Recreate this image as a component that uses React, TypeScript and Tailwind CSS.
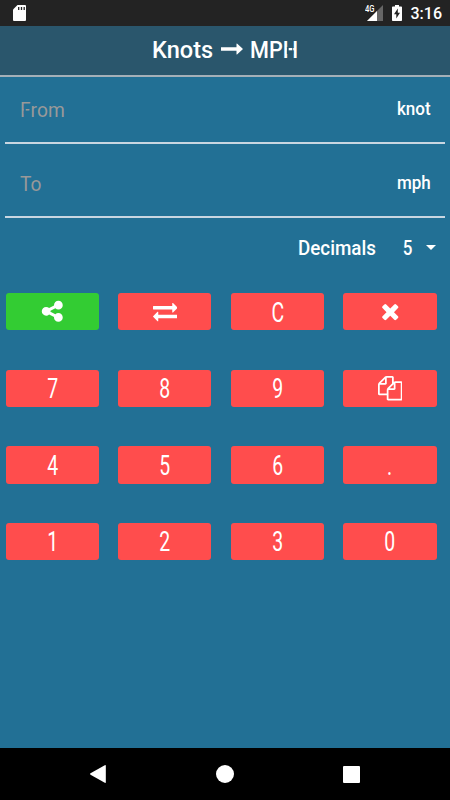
import React from "react";

const paths = {
  share:
    "M1344 1024q133 0 226.5 93.5t93.5 226.5-93.5 226.5-226.5 93.5-226.5-93.5-93.5-226.5q0-12 2-34l-360-180q-92 86-218 86-133 0-226.5-93.5t-93.5-226.5 93.5-226.5 226.5-93.5q126 0 218 86l360-180q-2-22-2-34 0-133 93.5-226.5t226.5-93.5 226.5 93.5 93.5 226.5-93.5 226.5-226.5 93.5q-126 0-218-86l-360 180q2 22 2 34t-2 34l360 180q92-86 218-86z",
  swap:
    "M1792 1184v192q0 13-9.5 22.5t-22.5 9.5h-1376v192q0 13-9.5 22.5t-22.5 9.5q-12 0-24-10l-319-320q-9-9-9-22 0-14 9-23l320-320q9-9 23-9 13 0 22.5 9.5t9.5 22.5v192h1376q13 0 22.5 9.5t9.5 22.5zm0-544q0 14-9 23l-320 320q-9 9-23 9-13 0-22.5-9.5t-9.5-22.5v-192h-1376q-13 0-22.5-9.5t-9.5-22.5v-192q0-13 9.5-22.5t22.5-9.5h1376v-192q0-14 9-23t23-9q12 0 24 10l319 319q9 9 9 23z",
  remove:
    "M1490 1322q0 40-28 68l-136 136q-28 28-68 28t-68-28l-294-294-294 294q-28 28-68 28t-68-28l-136-136q-28-28-28-68t28-68l294-294-294-294q-28-28-28-68t28-68l136-136q28-28 68-28t68 28l294 294 294-294q28-28 68-28t68 28l136 136q28 28 28 68t-28 68l-294 294 294 294q28 28 28 68z",
  copy:
    "M1696 384q40 0 68 28t28 68v1216q0 40-28 68t-68 28h-960q-40 0-68-28t-28-68v-288h-544q-40 0-68-28t-28-68v-672q0-40 20-88t48-76l408-408q28-28 76-48t88-20h416q40 0 68 28t28 68v328q68-40 128-40h416zm-544 213l-299 299h299v-299zm-640-384l-299 299h299v-299zm196 647l316-316v-416h-384v416q0 40-28 68t-68 28h-416v640h512v-256q0-40 20-88t48-76zm956 804v-1152h-384v416q0 40-28 68t-68 28h-416v640h896z",
};

type IconName = keyof typeof paths;

function Icon({ name }: { name: IconName }) {
  return (
    <svg viewBox="0 0 1792 1792" className="h-[24.5px] w-[24.5px] fill-white">
      <path d={paths[name]} />
    </svg>
  );
}

const keys: { label?: string; icon?: IconName }[] = [
  { icon: "share" }, { icon: "swap" }, { label: "C" }, { icon: "remove" },
  { label: "7" }, { label: "8" }, { label: "9" }, { icon: "copy" },
  { label: "4" }, { label: "5" }, { label: "6" }, { label: "." },
  { label: "1" }, { label: "2" }, { label: "3" }, { label: "0" },
];

function Key({ label, icon }: { label?: string; icon?: IconName }) {
  return (
    <button
      className={`flex h-[37.4px] w-[93.4px] items-center justify-center rounded-[3px] ${
        icon === "share" ? "bg-[#33cc33]" : "bg-[#ff4d4d]"
      }`}
    >
      {icon ? (
        <Icon name={icon} />
      ) : (
        <span className="mt-[3px] scale-x-[0.72] text-[27px] leading-none">{label}</span>
      )}
    </button>
  );
}

function StatusBar() {
  return (
    <div className="flex h-[26px] shrink-0 items-center bg-[#232323] pl-[13px] pr-[9px]">
      <svg viewBox="0 0 13 16" className="h-4 w-[13px]">
        <path d="M4.5 0H12a1 1 0 0 1 1 1v14a1 1 0 0 1-1 1H1a1 1 0 0 1-1-1V4.5z" fill="#fff" />
        <path d="M5.7 2v3M8.5 2v3M11.2 2v3" stroke="#232323" strokeWidth="1.3" />
      </svg>
      <div className="ml-auto flex items-center">
        <span className="mb-[8px] mr-[-6px] w-[8px] text-[9.5px] font-medium leading-none">
          <span className="inline-block origin-left scale-x-[0.8]">4G</span>
        </span>
        <svg viewBox="0 0 16 16" className="mr-[9px] h-4 w-4">
          <path d="M0 16L16 0v16z" fill="#666" />
          <path d="M0 16L10 6v10z" fill="#fff" />
        </svg>
        <svg viewBox="0 0 10 16" className="mr-[9px] h-4 w-[10px]">
          <path d="M3 0h4v1.5h2.2q.8 0 .8.8v13q0 .7-.8.7H.8q-.8 0-.8-.7v-13q0-.8.8-.8H3z" fill="#fff" />
          <path d="M5.8 3.5L2 9.3h2.3v4.2L8 7.7H5.8z" fill="#232323" />
        </svg>
        <span className="mr-[-1px] mt-[2px] text-[16px] font-medium leading-none">3:16</span>
      </div>
    </div>
  );
}

function Field({ children, unit }: { children: React.ReactNode; unit: string }) {
  return (
    <div className="mx-[5px] flex h-[74px] items-center justify-between border-b-2 border-[#c9d6e1] pl-[15px] pr-[14px] pt-[8px]">
      <span className="origin-left scale-x-[0.96] text-[20px] text-[#999]">{children}</span>
      <span className="origin-right scale-x-[0.92] text-[18.5px] font-medium">{unit}</span>
    </div>
  );
}

export default function App() {
  return (
    <div className="flex h-[800px] w-[450px] flex-col overflow-hidden bg-[#227095] font-['Roboto',sans-serif] text-white">
      <StatusBar />
      <header className="flex h-[51px] shrink-0 items-center border-b-2 border-[#a5b0b8] bg-[#2a566c] pb-[2px] pl-[152px] text-[24px] font-medium leading-none">
        <span className="w-[69px]">
          <span className="inline-block origin-left scale-x-[0.98]">Knots</span>
        </span>
        <svg viewBox="0 0 22 12" className="mb-px h-3 w-[22px] fill-white">
          <path d="M0 4.2h15.5V1q0-1 .8-.3L22 6l-5.7 5.3q-.8.7-.8-.3V7.8H0z" />
        </svg>
        <span className="ml-[7px]">
          <span className="inline-block origin-left scale-x-[0.9]">
            MP
            <span className="relative inline-block">
              H
              <span className="absolute left-[5px] top-[9px] h-[7px] w-[1.7px] bg-[#2a566c]" />
              <span className="absolute right-[5px] top-[9px] h-[7px] w-[1.7px] bg-[#2a566c]" />
            </span>
          </span>
        </span>
      </header>
      <main className="flex flex-1 flex-col">
        <div className="mt-[-7px]">
          <Field unit="knot">
            <span className="relative inline-block leading-none">
              F
              <span className="absolute left-[3.8px] top-[8.5px] h-[5px] w-[1.8px] bg-[#227095]" />
            </span>
            rom
          </Field>
          <Field unit="mph">To</Field>
        </div>
        <div className="flex h-[60px] items-center justify-end pb-px pr-[14px] text-[20px] font-medium">
          <span className="origin-right scale-x-[0.94]">Decimals</span>
          <span className="ml-[26px] scale-x-[0.85]">5</span>
          <svg viewBox="0 0 10 5" className="ml-[13px] h-[5px] w-[10px] fill-white">
            <path d="M0 0h10L5 5z" />
          </svg>
        </div>
        <div className="ml-[5.5px] mt-[15px] grid w-fit grid-cols-4 gap-x-[19.2px] gap-y-[39.2px]">
          {keys.map((key) => (
            <Key key={key.label ?? key.icon} {...key} />
          ))}
        </div>
      </main>
      <nav className="flex h-[52px] shrink-0 items-center justify-between bg-black pl-[90px] pr-[90px]">
        <svg viewBox="0 0 16 18" className="h-[18px] w-4 fill-white">
          <path d="M.5 8.3L14.8.2q1-.5 1 .6v16.4q0 1.1-1 .6L.5 9.7q-.9-.7 0-1.4z" />
        </svg>
        <div className="size-[18px] rounded-full bg-white" />
        <div className="size-[17px] rounded-[1px] bg-white" />
      </nav>
    </div>
  );
}
